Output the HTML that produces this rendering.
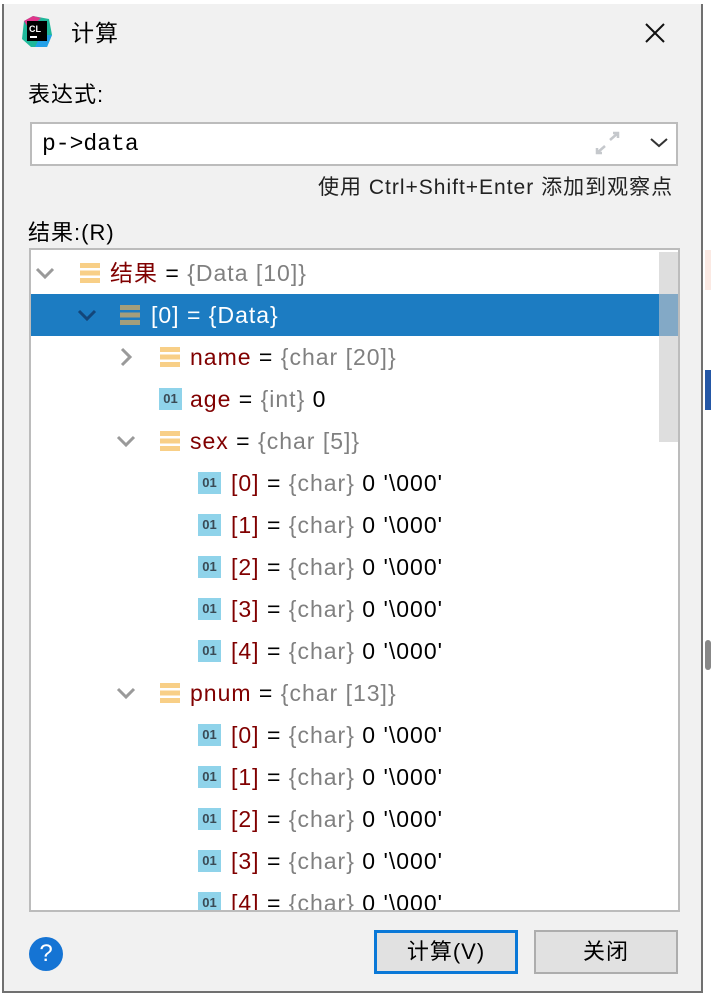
<!DOCTYPE html>
<html><head><meta charset="utf-8"><style>
*{margin:0;padding:0;box-sizing:border-box}
body{width:711px;height:996px;background:#fff;position:relative;overflow:hidden;font-family:"Liberation Sans","Noto Sans CJK SC",sans-serif;color:#000}
.a{position:absolute}
.win{left:2px;top:4px;width:701px;height:989px;background:#f1f1f1;border-left:2px solid #707070;border-right:2px solid #707070;border-bottom:2px solid #707070}
.t{font-size:23px;letter-spacing:1px;line-height:42px;white-space:nowrap}
.r{color:#800000}.g{color:#808080}
.stk{width:20px;height:20px;background:linear-gradient(#f8cf87 0 5px,#fff 5px 7.5px,#f8cf87 7.5px 12.5px,#fff 12.5px 15px,#f8cf87 15px 20px)}
.o1{width:23px;height:22px;background:#8fd3ea;color:#3a4a55;font-size:13px;font-weight:bold;text-align:center;line-height:22px}
</style></head><body>
<div class="a win"></div>
<div class="a" style="left:705px;top:250px;width:6px;height:40px;background:#fbe9e3"></div>
<div class="a" style="left:705px;top:370px;width:6px;height:40px;background:#2457a6"></div>
<div class="a" style="left:705px;top:640px;width:6px;height:30px;background:#888;border-radius:3px"></div>
<svg class="a" style="left:21px;top:15px" width="32" height="34" viewBox="0 0 32 34"><polygon points="3,6 12,1 28,4 31,20 26,32 10,32 1,24" fill="#1fb89a"/><polygon points="3,6 12,1 20,3 8,14" fill="#e0358b"/><polygon points="20,20 31,20 26,32 14,32" fill="#23a0e8"/><rect x="6" y="6" width="20" height="20" fill="#000"/><text x="8" y="17" font-size="9" font-weight="bold" fill="#fff" font-family="Liberation Sans">CL</text><rect x="9" y="21" width="7" height="2" fill="#fff"/></svg>
<div class="a" style="left:71px;top:18px;font-size:23px;line-height:30px;letter-spacing:1px">计算</div>
<svg class="a" style="left:643px;top:21px" width="24" height="24"><path d="M3 3L21 21M21 3L3 21" stroke="#111" stroke-width="2"/></svg>
<div class="a" style="left:28px;top:80px;font-size:22px;line-height:30px;letter-spacing:1px">表达式:</div>
<div class="a" style="left:30px;top:122px;width:648px;height:44px;background:#fff;border:2px solid #bcbcbc"></div>
<div class="a" style="left:42px;top:130px;font-family:'Liberation Mono',monospace;font-size:23px;line-height:28px">p-&gt;data</div>
<svg class="a" style="left:594px;top:130px" width="28" height="26"><path d="M16 10L24 3M19 3h5v5M11 16L3 23M3 18v5h5" stroke="#c5c8cc" stroke-width="2.5" fill="none"/></svg>
<svg class="a" style="left:649px;top:136px" width="20" height="14"><path d="M2 3L10 10L18 3" stroke="#333" stroke-width="2" fill="none"/></svg>
<div class="a" style="left:318px;top:174px;font-size:21px;letter-spacing:1px;line-height:28px;color:#222;white-space:nowrap">使用 Ctrl+Shift+Enter 添加到观察点</div>
<div class="a" style="left:28px;top:218px;font-size:22px;line-height:30px;letter-spacing:1px">结果:(R)</div>
<div class="a" style="left:29px;top:248px;width:651px;height:664px;background:#fff;border:2px solid #bcbcbc;overflow:hidden">
<div class="a" style="left:0;top:44px;width:647px;height:42px;background:#1c7cc2"></div>
<div class="a" style="left:628px;top:2px;width:20px;height:190px;background:rgba(200,200,200,0.6)"></div>
<div id="rows"></div>
</div>
<div class="a" style="left:29px;top:937px;width:34px;height:34px;border-radius:50%;background:#1574d4;color:#fff;font-size:24px;line-height:34px;text-align:center">?</div>
<div class="a" style="left:374px;top:930px;width:144px;height:44px;background:#e1e1e1;border:3px solid #0a78d7;font-size:22px;letter-spacing:1px;line-height:38px;text-align:center">计算(V)</div>
<div class="a" style="left:534px;top:930px;width:144px;height:44px;background:#e1e1e1;border:2px solid #adadad;font-size:22px;letter-spacing:1px;line-height:40px;text-align:center">关闭</div>
<script>
var R=[
[0,'v','s','<span class="r">结果</span> = <span class="g">{Data [10]}</span>'],
[1,'v','sd','<span style="color:#fff">[0] = {Data}</span>'],
[2,'>','s','<span class="r">name</span> = <span class="g">{char [20]}</span>'],
[2,'','o','<span class="r">age</span> = <span class="g">{int}</span> 0'],
[2,'v','s','<span class="r">sex</span> = <span class="g">{char [5]}</span>']];
for(var i=0;i<5;i++)R.push([3,'','o','<span class="r">['+i+']</span> = <span class="g">{char}</span> 0 \'\\000\'']);
R.push([2,'v','s','<span class="r">pnum</span> = <span class="g">{char [13]}</span>']);
for(var i=0;i<5;i++)R.push([3,'','o','<span class="r">['+i+']</span> = <span class="g">{char}</span> 0 \'\\000\'']);
var h='',cx=[4,46,85,124],ix=[49,89,129,168],tx=[79,120,159,200];
R.forEach(function(r,k){var y=2+k*42,l=r[0];
if(r[1]){var c=r[2]=='sd'?'#13467a':'#9a9a9a';var p=r[1]=='v'?'M2 6L10 14L18 6':'M6 2L14 10L6 18';h+='<svg class="a" style="left:'+cx[l]+'px;top:'+(y+11)+'px" width="20" height="20"><path d="'+p+'" stroke="'+c+'" stroke-width="3" fill="none"/></svg>';}
if(r[2]=='o')h+='<div class="a o1" style="left:'+(ix[l]-1)+'px;top:'+(y+10)+'px">01</div>';
else h+='<div class="a stk" style="left:'+ix[l]+'px;top:'+(y+11)+'px;'+(r[2]=='sd'?'background:linear-gradient(#a39e7c 0 5px,#1c7cc2 5px 7.5px,#a39e7c 7.5px 12.5px,#1c7cc2 12.5px 15px,#a39e7c 15px 20px)':'')+'"></div>';
h+='<div class="a t" style="left:'+tx[l]+'px;top:'+y+'px">'+r[3]+'</div>';});
document.getElementById('rows').innerHTML=h;
</script>
</body></html>
